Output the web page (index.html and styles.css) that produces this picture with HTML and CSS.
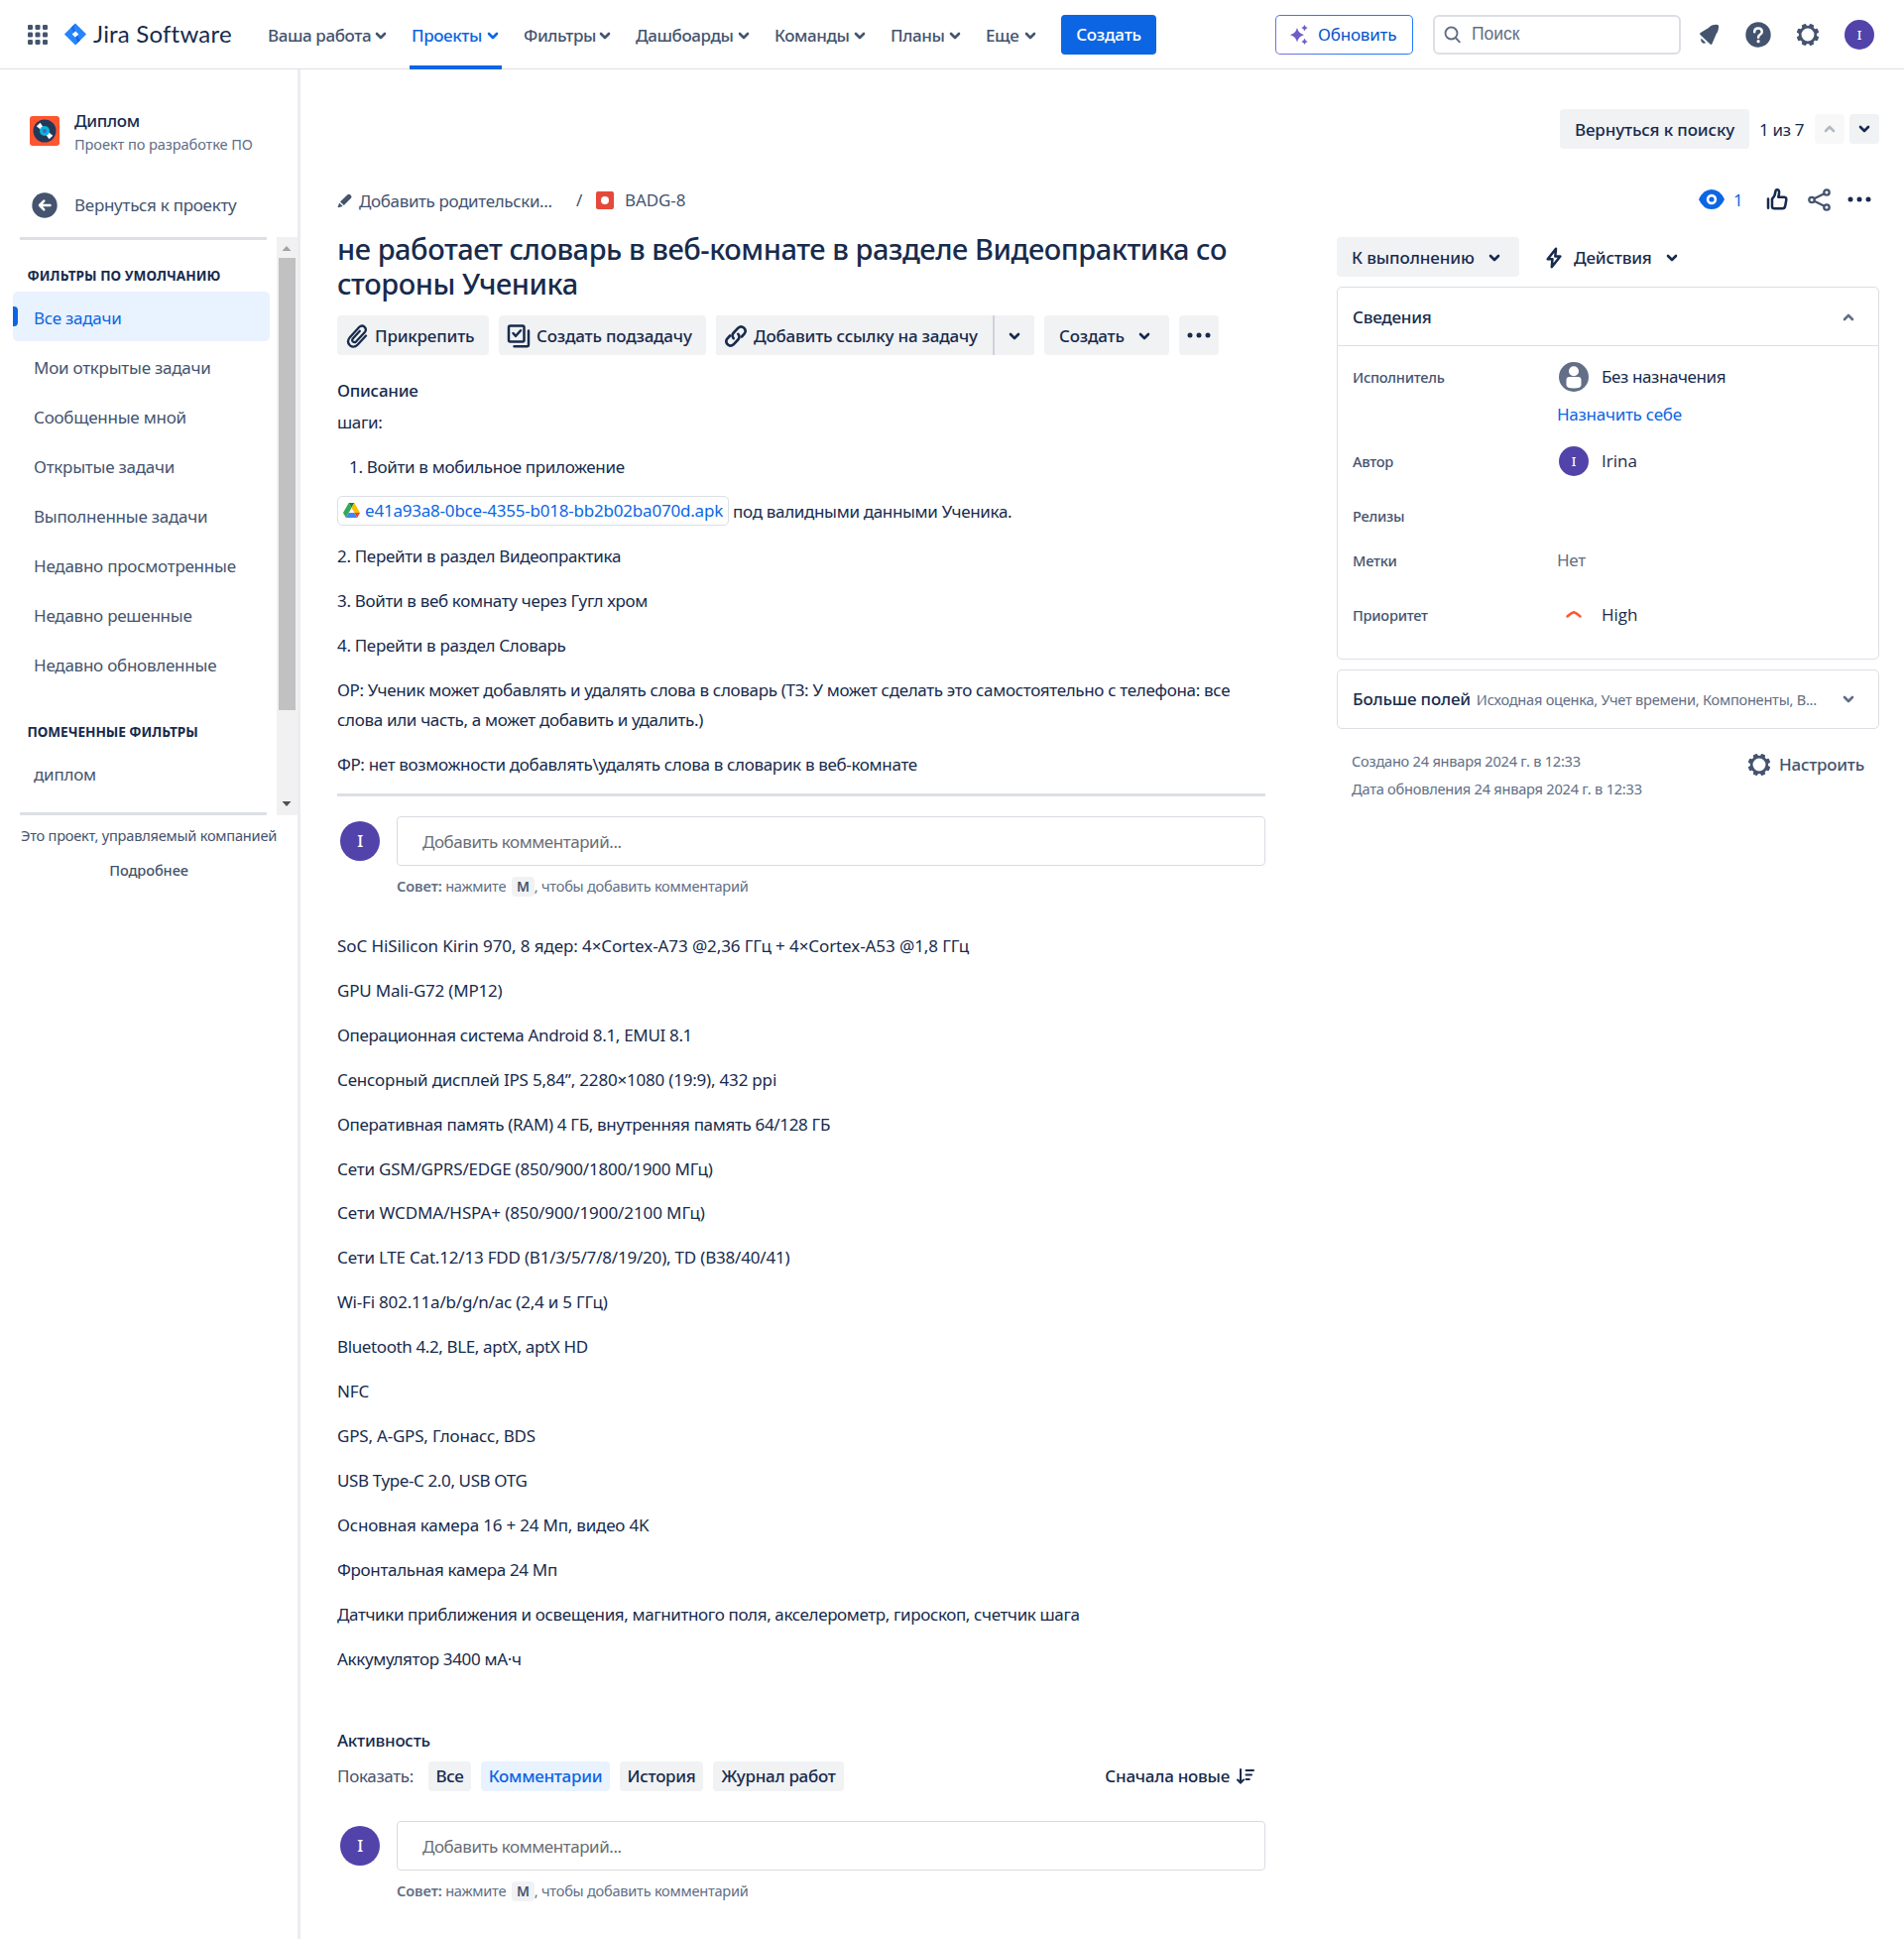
FILE: index.html
```html
<!DOCTYPE html>
<html lang="ru">
<head>
<meta charset="utf-8">
<title>BADG-8 — Jira Software</title>
<link rel="stylesheet" href="styles.css">
</head>
<body>
<svg class="defs" width="0" height="0">
  <symbol id="down" viewBox="0 0 12 8"><path d="M2 2l4 4 4-4" fill="none" stroke="currentColor" stroke-width="2.6" stroke-linecap="round" stroke-linejoin="round"/></symbol>
  <symbol id="up" viewBox="0 0 12 8"><path d="M2 6l4-4 4 4" fill="none" stroke="currentColor" stroke-width="2.6" stroke-linecap="round" stroke-linejoin="round"/></symbol>
  <symbol id="dots" viewBox="0 0 24 6"><circle cx="3" cy="3" r="2.5" fill="currentColor"/><circle cx="12" cy="3" r="2.5" fill="currentColor"/><circle cx="21" cy="3" r="2.5" fill="currentColor"/></symbol>
  <symbol id="gear" viewBox="0 0 24 24"><circle cx="12" cy="12" r="7.8" fill="none" stroke="currentColor" stroke-width="2.7"/><g fill="currentColor"><path id="tooth" d="M9.300 4.500L9.800 1.300q.1-.6.7-.6h3q.6 0 .7.6l.5 3.200z" transform="rotate(22.5 12 12)"/><use href="#tooth" transform="rotate(45 12 12)"/><use href="#tooth" transform="rotate(90 12 12)"/><use href="#tooth" transform="rotate(135 12 12)"/><use href="#tooth" transform="rotate(180 12 12)"/><use href="#tooth" transform="rotate(225 12 12)"/><use href="#tooth" transform="rotate(270 12 12)"/><use href="#tooth" transform="rotate(315 12 12)"/></g></symbol>
</svg>

<header class="topbar">
  <svg class="switcher" width="20" height="20" viewBox="0 0 20 20" fill="#44546f"><rect width="5" height="5" rx="1.3"/><rect x="7.5" width="5" height="5" rx="1.3"/><rect x="15" width="5" height="5" rx="1.3"/><rect y="7.5" width="5" height="5" rx="1.3"/><rect x="7.5" y="7.5" width="5" height="5" rx="1.3"/><rect x="15" y="7.5" width="5" height="5" rx="1.3"/><rect y="15" width="5" height="5" rx="1.3"/><rect x="7.5" y="15" width="5" height="5" rx="1.3"/><rect x="15" y="15" width="5" height="5" rx="1.3"/></svg>
  <svg class="logo" width="22" height="23" viewBox="0 0 22 22"><defs><linearGradient id="lg" x1="1" y1="0" x2="0" y2="1"><stop offset="0" stop-color="#0052cc"/><stop offset="1" stop-color="#2684ff"/></linearGradient></defs><path fill="#2684ff" fill-rule="evenodd" d="M11 0l10.6 10.4q.6.6 0 1.2L11 22 .4 11.600q-.6-.6 0-1.200zM11 7.700L7.700 11l3.300 3.300 3.300-3.300z"/><path fill="url(#lg)" d="M11 7.700C8.800 5.500 8.800 2.300 11 0L6.200 4.700 9.300 9.400z"/><path fill="url(#lg)" d="M11 14.300c2.200 2.200 2.200 5.400 0 7.700l4.800-4.700-3.100-4.700z"/></svg>
  <span class="brand">Jira Software</span>
  <nav class="menu">
    <a>Ваша работа<svg class="chev"><use href="#down"/></svg></a>
    <a class="active">Проекты<svg class="chev"><use href="#down"/></svg></a>
    <a>Фильтры<svg class="chev"><use href="#down"/></svg></a>
    <a>Дашбоарды<svg class="chev"><use href="#down"/></svg></a>
    <a>Команды<svg class="chev"><use href="#down"/></svg></a>
    <a>Планы<svg class="chev"><use href="#down"/></svg></a>
    <a>Еще<svg class="chev"><use href="#down"/></svg></a>
  </nav>
  <button class="create">Создать</button>
  <div class="tools">
    <button class="upgrade"><svg width="18" height="20" viewBox="0 0 18 20" fill="#6e5dc6"><path d="M7 3q1.300 5.500 7 7.200Q8.300 11.800 7 17.500 5.700 11.800 0 10.200 5.700 8.500 7 3zM14.500 0q.7 2.300 3.200 3-2.500.7-3.200 3.200-.7-2.500-3.200-3.200 2.500-.7 3.200-3zM14.500 13.800q.7 2.500 3.200 3.200-2.500.7-3.200 3-.7-2.300-3.200-3 2.500-.7 3.200-3.200z"/></svg>Обновить</button>
    <div class="search"><svg width="17" height="18" viewBox="0 0 17 18" fill="none" stroke="#626f86" stroke-width="1.900"><circle cx="7.500" cy="7.500" r="6"/><path d="M11.800 12l4 4.300" stroke-linecap="round"/></svg>Поиск</div>
    <svg class="bell" width="22" height="22" viewBox="0 0 22 22" fill="#44546f"><path d="M13.300 1.600q5-1.700 6.300-.3 1.100 1.200-.2 5.600-.4 1.400-1.500 2.900L13.500 20q-.7 1.600-2 .5L1.500 11q-1-1.200.3-1.900L10 4q1.500-1.700 3.300-2.400zM2.600 14.700l4.500 4.300q-2 1.500-3.800-.2-1.800-1.900-.7-4.100z"/></svg>
    <svg class="help" width="26" height="26" viewBox="0 0 26 26"><circle cx="13" cy="13" r="12.700" fill="#44546f"/><path d="M9.200 10.200q0-3.800 3.800-3.800 3.800 0 3.800 3.500 0 1.700-1.800 2.900-1.900 1.200-1.900 3" fill="none" stroke="#fff" stroke-width="2.500" stroke-linecap="round"/><circle cx="13.100" cy="19.700" r="1.600" fill="#fff"/></svg>
    <svg class="gear" width="24" height="24"><use href="#gear"/></svg>
    <span class="avatar s30">I</span>
  </div>
</header>

<div class="page">
  <aside class="side">
    <div class="project">
      <svg width="30" height="30" viewBox="0 0 30 30"><rect width="30" height="30" rx="3" fill="#ff5630"/><circle cx="15" cy="15" r="11.500" fill="#253858"/><path d="M6.800 10.200L10.500 6.800 15 13l8.300 6.800L19.500 23.300 15 17z" fill="#fff"/><circle cx="15" cy="15" r="5" fill="#00b8d9"/><circle cx="15" cy="15" r="2" fill="#6554c0"/></svg>
      <div><b>Диплом</b><small>Проект по разработке ПО</small></div>
    </div>
    <a class="back"><svg width="26" height="26" viewBox="0 0 26 26"><circle cx="13" cy="13" r="12.700" fill="#44546f"/><path d="M18.500 13H8m4.300-4.300L8 13l4.300 4.300" fill="none" stroke="#fff" stroke-width="2.500" stroke-linecap="round" stroke-linejoin="round"/></svg>Вернуться к проекту</a>
    <div class="scroller">
      <div class="filters">
        <h4>Фильтры по умолчанию</h4>
        <a class="on">Все задачи</a>
        <a>Мои открытые задачи</a>
        <a>Сообщенные мной</a>
        <a>Открытые задачи</a>
        <a>Выполненные задачи</a>
        <a>Недавно просмотренные</a>
        <a>Недавно решенные</a>
        <a>Недавно обновленные</a>
        <h4 class="second">Помеченные фильтры</h4>
        <a>диплом</a>
      </div>
      <div class="track">
        <svg width="20" height="21" viewBox="0 0 20 21"><path d="M5.500 14l4.500-5 4.500 5z" fill="#a3a3a3"/></svg>
        <i></i>
        <svg class="end" width="20" height="21" viewBox="0 0 20 21"><path d="M5.500 7l4.500 5 4.500-5z" fill="#505050"/></svg>
      </div>
    </div>
    <p class="managed">Это проект, управляемый компанией</p>
    <p class="more">Подробнее</p>
  </aside>

  <main class="main">
    <div class="pager">
      <button class="btn find">Вернуться к поиску</button>
      <span>1 из 7</span>
      <button class="btn sq off"><svg class="chev"><use href="#up"/></svg></button>
      <button class="btn sq"><svg class="chev"><use href="#down"/></svg></button>
    </div>
    <div class="columns">
      <section class="issue">
        <div class="crumbs">
          <svg width="16" height="15" viewBox="0 0 16 15" fill="#44546f"><path d="M10.500 1.300q1.200-1.200 2.600 0l.9.900q1.200 1.200 0 2.500L6.800 12 3 8.500zM2.200 9.500L5.700 13 1.300 14.300q-.8.100-.6-.7z"/></svg>
          <span class="parent">Добавить родительски...</span>
          <span class="slash">/</span>
          <svg width="18" height="18" viewBox="0 0 18 18"><rect width="18" height="18" rx="2" fill="#e5493a"/><circle cx="9" cy="9" r="4" fill="#fff"/></svg>
          <span class="key">BADG-8</span>
        </div>
        <h1>не работает словарь в веб-комнате в разделе Видеопрактика со стороны Ученика</h1>
        <div class="actions">
          <button class="btn attach"><svg width="24" height="26" viewBox="0 0 24 26" fill="none" stroke="currentColor" stroke-width="2.300" stroke-linecap="round"><path d="M21 12.500l-8.300 9q-3.800 3.800-7.700.8-3.800-3.500-.5-7.700L14 4q2.900-2.700 5.600-.4 2.500 2.600.2 5.500l-8.600 9.200q-1.700 1.600-3.300.2-1.400-1.500.1-3.300l6.800-7.400"/></svg>Прикрепить</button>
          <button class="btn subtask"><svg width="24" height="24" viewBox="0 0 24 24" fill="none" stroke="currentColor" stroke-width="2.500" stroke-linejoin="round" stroke-linecap="round"><rect x="2" y="1.500" width="15.500" height="16" rx="1.500"/><path d="M6.500 9l2.600 2.800L14 6.200M22 6.500V21q0 1.200-1.200 1.200H7.500"/></svg>Создать подзадачу</button>
          <div class="split">
            <button class="btn link"><svg width="24" height="24" viewBox="0 0 24 24" fill="none" stroke="currentColor" stroke-width="2.600" stroke-linecap="round"><path d="M9.700 14.200q-2.400-3 .1-5.700l4.500-4.800q3-2.600 6 0 2.700 3 .2 6l-2.600 2.800"/><path d="M14.300 9.800q2.400 3-.1 5.700l-4.500 4.800q-3 2.600-6 0-2.700-3-.2-6l2.600-2.800"/></svg>Добавить ссылку на задачу</button>
            <button class="btn caret"><svg class="chev"><use href="#down"/></svg></button>
          </div>
          <button class="btn make">Создать<svg class="chev"><use href="#down"/></svg></button>
          <button class="btn kebab"><svg width="24" height="6"><use href="#dots"/></svg></button>
        </div>
        <h2>Описание</h2>
        <div class="text">
          <p>шаги:</p>
          <p class="step">1. Войти в мобильное приложение</p>
          <p><span class="card-link"><svg width="17" height="16" viewBox="0 0 17 16"><path fill="#188038" d="M5.700 0h5.600L8.500 4.900z"/><path fill="#34a853" d="M5.700 0L0 10l2.800 5L8.500 4.900z"/><path fill="#fbbc04" d="M11.300 0L17 10h-5.600L8.500 4.900z"/><path fill="#4285f4" d="M5.600 10h5.800l2.800 5H2.800z"/><path fill="#ea4335" d="M11.400 10H17l-2.800 5z"/></svg>e41a93a8-0bce-4355-b018-bb2b02ba070d.apk</span> под валидными данными Ученика.</p>
          <p>2. Перейти в раздел Видеопрактика</p>
          <p>3. Войти в веб комнату через Гугл хром</p>
          <p>4. Перейти в раздел Словарь</p>
          <p>ОР: Ученик может добавлять и удалять слова в словарь (ТЗ: У может сделать это самостоятельно с телефона: все<br>слова или часть, а может добавить и удалить.)</p>
          <p>ФР: нет возможности добавлять\удалять слова в словарик в веб-комнате</p>
        </div>
        <hr>
        <div class="comment"><span class="avatar s40">I</span><div class="field">Добавить комментарий...</div></div>
        <p class="hint"><b>Совет:</b> нажмите <kbd>M</kbd>, чтобы добавить комментарий</p>
        <div class="text specs">
          <p class="wide">SoC HiSilicon Kirin 970, 8 ядер: 4×Cortex-A73 @2,36 ГГц + 4×Cortex-A53 @1,8 ГГц</p>
          <p class="lat">GPU Mali-G72 (MP12)</p>
          <p>Операционная система Android 8.1, EMUI 8.1</p>
          <p class="lat">Сенсорный дисплей IPS 5,84”, 2280×1080 (19:9), 432 ppi</p>
          <p>Оперативная память (RAM) 4 ГБ, внутренняя память 64/128 ГБ</p>
          <p class="lat">Сети GSM/GPRS/EDGE (850/900/1800/1900 МГц)</p>
          <p class="wide tight">Сети WCDMA/HSPA+ (850/900/1900/2100 МГц)</p>
          <p class="lat">Сети LTE Cat.12/13 FDD (B1/3/5/7/8/19/20), TD (B38/40/41)</p>
          <p class="lat">Wi-Fi 802.11a/b/g/n/ac (2,4 и 5 ГГц)</p>
          <p class="narrow">Bluetooth 4.2, BLE, aptX, aptX HD</p>
          <p class="wide">NFC</p>
          <p class="lat">GPS, A-GPS, Глонасс, BDS</p>
          <p class="narrow">USB Type-C 2.0, USB OTG</p>
          <p class="lat">Основная камера 16 + 24 Мп, видео 4K</p>
          <p>Фронтальная камера 24 Мп</p>
          <p class="narrow">Датчики приближения и освещения, магнитного поля, акселерометр, гироскоп, счетчик шага</p>
          <p>Аккумулятор 3400 мА·ч</p>
        </div>
        <h2 class="activity">Активность</h2>
        <div class="tabs">
          <span class="show">Показать:</span>
          <a class="t1">Все</a><a class="t2 on">Комментарии</a><a class="t3">История</a><a class="t4">Журнал работ</a>
          <span class="sort">Сначала новые<svg width="18" height="17" viewBox="0 0 18 17" fill="none" stroke="currentColor" stroke-width="2" stroke-linecap="round"><path d="M4 1v13M1 11.500l3 3 3-3M9.500 2H17M9.500 6.500H15M9.500 11h3.300"/></svg></span>
        </div>
        <div class="comment last"><span class="avatar s40">I</span><div class="field">Добавить комментарий...</div></div>
        <p class="hint"><b>Совет:</b> нажмите <kbd>M</kbd>, чтобы добавить комментарий</p>
      </section>

      <section class="details">
        <div class="icons">
          <svg width="26" height="22" viewBox="0 0 26 22"><path d="M0 11Q4.500 1 13 1t13 10q-4.500 10-13 10T0 11z" fill="#0c66e4"/><circle cx="13" cy="11" r="3.900" fill="none" stroke="#fff" stroke-width="2.600"/></svg>
          <span class="watch">1</span>
          <svg class="like" width="22" height="22" viewBox="0 0 22 22" fill="none" stroke="#172b4d" stroke-width="2.500" stroke-linejoin="round" stroke-linecap="round"><path d="M2 10.500v9.300M6 18.500v-8q3-2.500 3.400-7.300.2-1.900 1.700-1.900 2 0 2 2.700 0 2.300-.9 4.700h6q2.500.3 2.100 2.800l-1.100 6.200q-.5 2.500-2.800 2.500H8.500Q6 20.200 6 18.500z"/></svg>
          <svg class="share" width="23" height="23" viewBox="0 0 23 23" fill="none" stroke="#44546f" stroke-width="2.300"><circle cx="4" cy="11.500" r="2.700"/><circle cx="19" cy="4" r="2.700"/><circle cx="19" cy="19" r="2.700"/><path d="M6.500 10.200L16.600 5.200M6.500 12.800l10.100 5"/></svg>
          <svg class="kebab2" width="24" height="6"><use href="#dots"/></svg>
        </div>
        <div class="status">
          <button class="btn todo">К выполнению<svg class="chev"><use href="#down"/></svg></button>
          <button class="auto"><svg width="16" height="22" viewBox="0 0 16 22" fill="none" stroke="currentColor" stroke-width="2.500" stroke-linejoin="round"><path d="M10 1.800L1.700 12.200h4.800L5.800 20.200l8.500-10.700H9.300z"/></svg>Действия<svg class="chev"><use href="#down"/></svg></button>
        </div>
        <div class="panel">
          <div class="phead">Сведения<svg class="chev"><use href="#up"/></svg></div>
          <div class="fields">
            <div class="row r1"><label>Исполнитель</label><svg width="30" height="30" viewBox="0 0 30 30"><circle cx="15" cy="15" r="15" fill="#626f86"/><circle cx="15" cy="9.200" r="5" fill="#fff"/><path d="M7.500 18q0-3 3-3h9q3 0 3 3v5q0 3.500-7.500 3.500T7.500 23z" fill="#fff"/></svg><span>Без назначения</span></div>
            <a class="self">Назначить себе</a>
            <div class="row r2"><label>Автор</label><i class="avatar s30">I</i><span class="name">Irina</span></div>
            <div class="row r3"><label>Релизы</label></div>
            <div class="row r4"><label>Метки</label><em>Нет</em></div>
            <div class="row r5"><label>Приоритет</label><svg width="30" height="20" viewBox="0 0 30 20"><path d="M8.500 11.500Q12.500 8 15 7.200q2.500.8 6.500 4.300" fill="none" stroke="#ff5630" stroke-width="2.500" stroke-linecap="round" stroke-linejoin="round"/></svg><span class="name">High</span></div>
          </div>
        </div>
        <div class="panel extra"><b>Больше полей</b><span>Исходная оценка, Учет времени, Компоненты, В...</span><svg class="chev"><use href="#down"/></svg></div>
        <div class="foot">
          <div>Создано 24 января 2024 г. в 12:33<br>Дата обновления 24 января 2024 г. в 12:33</div>
          <a><svg width="24" height="24"><use href="#gear"/></svg>Настроить</a>
        </div>
      </section>
    </div>
  </main>
</div>
</body>
</html>
```
FILE: styles.css
```css
* { box-sizing: border-box; }
body {
  margin: 0;
  background: #fff;
  color: #172b4d;
  font: 400 17px/30px "Noto Sans", "Open Sans", sans-serif;
  letter-spacing: -0.33px;
}
.defs { position: absolute; }
svg { flex: none; display: block; }
p, h1, h2, h4 { margin: 0; }
button { border: 0; padding: 0; background: none; color: inherit; font: inherit; font-weight: 500; letter-spacing: -0.2px; }
.chev { width: 12px; height: 8px; }

.avatar {
  flex: none;
  display: flex;
  align-items: center;
  justify-content: center;
  border-radius: 50%;
  background: #5243aa;
  color: #fff;
  font-style: normal;
  font-weight: 500;
}
.s30 { width: 30px; height: 30px; font-size: 13px; }
.s40 { width: 40px; height: 40px; font-size: 17px; }

/* top bar */
.topbar {
  display: flex;
  align-items: center;
  height: 70px;
  padding: 0 30px 0 28px;
  border-bottom: 1px solid #dcdfe4;
}
.logo { margin-left: 17px; }
.brand { margin-left: 7px; width: 176px; padding-bottom: 2px; font-family: Lato, "Noto Sans", sans-serif; font-size: 24px; letter-spacing: 0.2px; white-space: nowrap; }
.menu { display: grid; grid-template-columns: 145px 113px 113px 140px 117px 96px 76px; height: 70px; }
.menu a {
  position: relative;
  display: flex;
  align-items: center;
  justify-content: space-between;
  padding-right: 25px;
  padding-top: 2px;
  color: #44546f;
  font-weight: 500;
  letter-spacing: -0.4px;
}
.menu .active { color: #0c66e4; }
.menu .active::after { content: ""; position: absolute; left: -2px; right: 22px; bottom: 0; height: 4px; background: #0c66e4; }
.create { width: 96px; height: 40px; border-radius: 4px; background: #0c66e4; color: #fff; }
.tools { display: flex; align-items: center; margin-left: auto; }
.upgrade {
  display: flex;
  align-items: center;
  gap: 10px;
  width: 139px;
  height: 40px;
  padding-left: 14px;
  border: 1.5px solid transparent;
  border-radius: 5px;
  background: linear-gradient(#fff, #fff) padding-box, linear-gradient(45deg, #8270db, #1d7afc 50%, #1d7afc) border-box;
  color: #0055cc;
  font-weight: 400;
}
.search {
  display: flex;
  align-items: center;
  gap: 11px;
  width: 250px;
  height: 40px;
  margin: 0 18px 0 20px;
  padding-left: 9px;
  border: 2px solid #dcdfe4;
  border-radius: 6px;
  color: #626f86;
  font: 17.5px "Liberation Sans", sans-serif;
  letter-spacing: 0;
}
.help { margin-left: 25px; }
.gear { margin: 0 25px; color: #44546f; }

.page { display: flex; height: 1885px; overflow: hidden; }

/* sidebar */
.side { flex: none; width: 303px; border-right: 3px solid #ebecf0; }
.project { display: flex; gap: 15px; height: 94px; padding: 42px 0 0 30px; line-height: 20px; }
.project svg { margin-top: 5px; }
.project b { display: block; font-weight: 500; }
.project small { display: block; margin-top: 3px; font-size: 14.600px; color: #626f86; letter-spacing: -0.1px; white-space: nowrap; }
.back { display: flex; align-items: center; gap: 17px; height: 30px; margin: 28px 0 17px 32px; color: #44546f; letter-spacing: -0.27px; }
.scroller { display: flex; height: 583px; }
.filters { width: 279px; }
.filters::before, .filters::after { content: ""; display: block; width: 249px; height: 3px; margin-left: 20px; background: #dcdfe4; }
.filters::after { margin-top: 15px; }
.filters h4 { height: 20px; margin: 26px 0 6px 27.5px; font-size: 13.600px; line-height: 20px; letter-spacing: 0.05px; text-transform: uppercase; }
.filters h4.second { margin: 34px 0 6px 27.5px; letter-spacing: -0.05px; }
.filters a { display: flex; align-items: center; height: 50px; margin: 0 7px 0 13px; padding: 3px 0 0 21px; color: #44546f; letter-spacing: -0.25px; }
.filters .on { position: relative; background: #e9f2ff; border-radius: 5px; color: #0c66e4; }
.filters .on::before { content: ""; position: absolute; left: 0; top: 15px; width: 5px; height: 20px; background: #0c66e4; border-radius: 0 4px 4px 0; }
.track { display: flex; flex-direction: column; width: 21px; background: #f1f1f1; }
.track i { width: 17px; height: 456px; margin-left: 2px; background: #c1c1c1; }
.track .end { margin-top: auto; }
.managed { margin-top: 10px; text-align: center; line-height: 20px; font-size: 14.600px; color: #44546f; letter-spacing: -0.23px; white-space: nowrap; }
.more { margin-top: 15px; text-align: center; line-height: 20px; font-size: 14.600px; font-weight: 500; color: #44546f; letter-spacing: -0.1px; }

/* main */
.main { flex: 1; padding: 40px 25px 0 37px; }
.btn { display: flex; align-items: center; height: 40px; border-radius: 4px; background: #f1f2f4; color: #172b4d; white-space: nowrap; padding-top: 2px; }
.pager { display: flex; align-items: center; justify-content: flex-end; height: 40px; }
.find { width: 191px; justify-content: center; letter-spacing: -0.13px; }
.pager span { width: 55px; margin-left: 10px; padding-top: 2px; white-space: nowrap; }
.sq { width: 30px; height: 30px; margin-left: 1px; justify-content: center; padding: 0; }
.sq + .sq { margin-left: 5px; }
.off { background: #f8f8f9; color: #b3b9c4; }
.columns { display: flex; gap: 72px; }
.issue { width: 936px; }
.details { width: 547px; }

.crumbs { display: flex; align-items: center; height: 40px; margin-top: 32px; color: #44546f; white-space: nowrap; }
.parent { width: 219px; margin-left: 6px; padding-top: 1px; letter-spacing: -0.36px; }
.slash { width: 20px; }
.key { margin-left: 11px; letter-spacing: -0.1px; }
h1 { margin-top: 11px; font-size: 29px; line-height: 35px; font-weight: 500; letter-spacing: -0.44px; }
.actions { display: flex; gap: 10px; margin-top: 15px; }
.attach { width: 153px; padding-left: 8px; gap: 6px; }
.subtask { width: 209px; padding-left: 8px; gap: 6px; }
.split { display: flex; gap: 2px; width: 321px; background: #cfd2dc; border-radius: 4px; }
.link { width: 279px; padding-left: 8px; gap: 6px; border-radius: 4px 0 0 4px; }
.caret { width: 40px; justify-content: center; border-radius: 0 4px 4px 0; }
.make { width: 126px; padding: 2px 19px 0 15px; justify-content: space-between; }
.kebab { width: 40px; justify-content: center; padding: 0; }
h2 { margin-top: 21px; font-size: 17px; line-height: 30px; font-weight: 500; letter-spacing: -0.25px; }
.text { margin-top: 2px; white-space: nowrap; }
.text p + p { margin-top: 15px; }
.text p + .tight { margin-top: 14px; }
.text .wide { letter-spacing: -0.09px; }
.text .lat { letter-spacing: -0.2px; }
.text .narrow { letter-spacing: -0.38px; }
.text .step { padding-left: 12px; }
.card-link {
  display: inline-flex;
  align-items: center;
  gap: 5px;
  height: 30px;
  margin-top: -1px;
  padding: 0 5px;
  border: 1px solid #dcdfe4;
  border-radius: 5px;
  color: #0c66e4;
  letter-spacing: -0.21px;
  vertical-align: top;
}
hr { height: 3px; margin: 14px 0 20px; border: 0; background: #dcdfe4; }
.comment { display: flex; align-items: center; gap: 17px; padding-left: 3px; }
.comment.last { margin-top: 30px; }
.field { flex: 1; height: 50px; padding: 10px 25px; border: 1px solid #d8dbe2; border-radius: 4px; color: #6b6e76; letter-spacing: -0.45px; }
.hint { margin: 10px 0 0 60px; font-size: 14.600px; line-height: 20px; color: #626f86; letter-spacing: -0.25px; }
.hint b { font-weight: 600; letter-spacing: -0.1px; }
kbd { display: inline-block; width: 23px; margin-left: 2px; border-radius: 4px; background: #f1f2f4; color: #44546f; font: 600 14px/20px "Noto Sans", sans-serif; text-align: center; }
.specs { margin-top: 35px; }
.activity { margin-top: 52px; }
.tabs { display: flex; align-items: center; gap: 10px; height: 30px; margin-top: 6px; white-space: nowrap; }
.show { width: 82px; color: #44546f; }
.tabs a { height: 30px; border-radius: 4px; background: #f1f2f4; text-align: center; font-weight: 500; letter-spacing: -0.3px; }
.tabs a.on { background: #e9f2ff; color: #0c66e4; }
.t1 { width: 43px; }
.t2 { width: 130px; }
.t3 { width: 84px; }
.t4 { width: 132px; }
.sort { display: flex; align-items: center; gap: 7px; margin-left: auto; padding-right: 11px; font-weight: 500; letter-spacing: -0.25px; }

/* details column */
.icons { display: flex; align-items: center; height: 38px; margin: 32px 8px 19px 365px; }
.watch { width: 42px; padding: 1px 0 0 9px; color: #0c66e4; }
.like { margin-right: 20px; }
.kebab2 { margin-left: auto; }
.status { display: flex; gap: 27px; }
.todo { width: 184px; padding: 2px 19px 0 15px; justify-content: space-between; letter-spacing: -0.1px; }
.auto { display: flex; align-items: center; height: 40px; padding-top: 1px; }
.auto svg:first-child { margin-right: 12px; }
.auto .chev { margin-left: 14px; }
.panel { margin-top: 10px; border: 1px solid #dcdfe4; border-radius: 5px; }
.phead { display: flex; align-items: center; justify-content: space-between; height: 59px; padding: 1px 24px 0 15px; border-bottom: 1px solid #dcdfe4; font-weight: 500; letter-spacing: -0.25px; }
.phead .chev, .extra .chev { color: #626f86; }
.fields { padding: 11px 0 24px 15px; }
.row { display: flex; align-items: center; height: 40px; }
.row label { width: 208px; padding-bottom: 1px; font-size: 14.600px; font-weight: 500; color: #44546f; letter-spacing: -0.25px; }
.row span { margin-left: 13px; letter-spacing: -0.4px; }
.row .name { letter-spacing: 0; font-family: "Open Sans", sans-serif; }
.row em { margin-left: -2px; font-style: normal; color: #626f86; }
.self { display: block; height: 30px; margin: 3px 0 0 206px; color: #0c66e4; letter-spacing: -0.27px; }
.r2 { margin-top: 12px; }
.r3 { margin-top: 15px; }
.r4 { height: 30px; margin-top: 10px; }
.r5 { margin-top: 20px; }
.extra { display: flex; align-items: center; height: 60px; padding: 0 24px 0 15px; white-space: nowrap; }
.extra b { font-weight: 500; letter-spacing: -0.2px; }
.extra span { margin-left: 6px; padding-bottom: 1px; font-size: 14.600px; color: #626f86; letter-spacing: -0.25px; }
.extra .chev { margin-left: auto; }
.foot { display: flex; justify-content: space-between; margin-top: 18px; padding: 0 15px; font-size: 14.600px; line-height: 28px; color: #626f86; letter-spacing: -0.24px; }
.foot a { display: flex; align-items: center; gap: 8px; height: 35px; font-size: 17px; font-weight: 500; color: #44546f; }
```
